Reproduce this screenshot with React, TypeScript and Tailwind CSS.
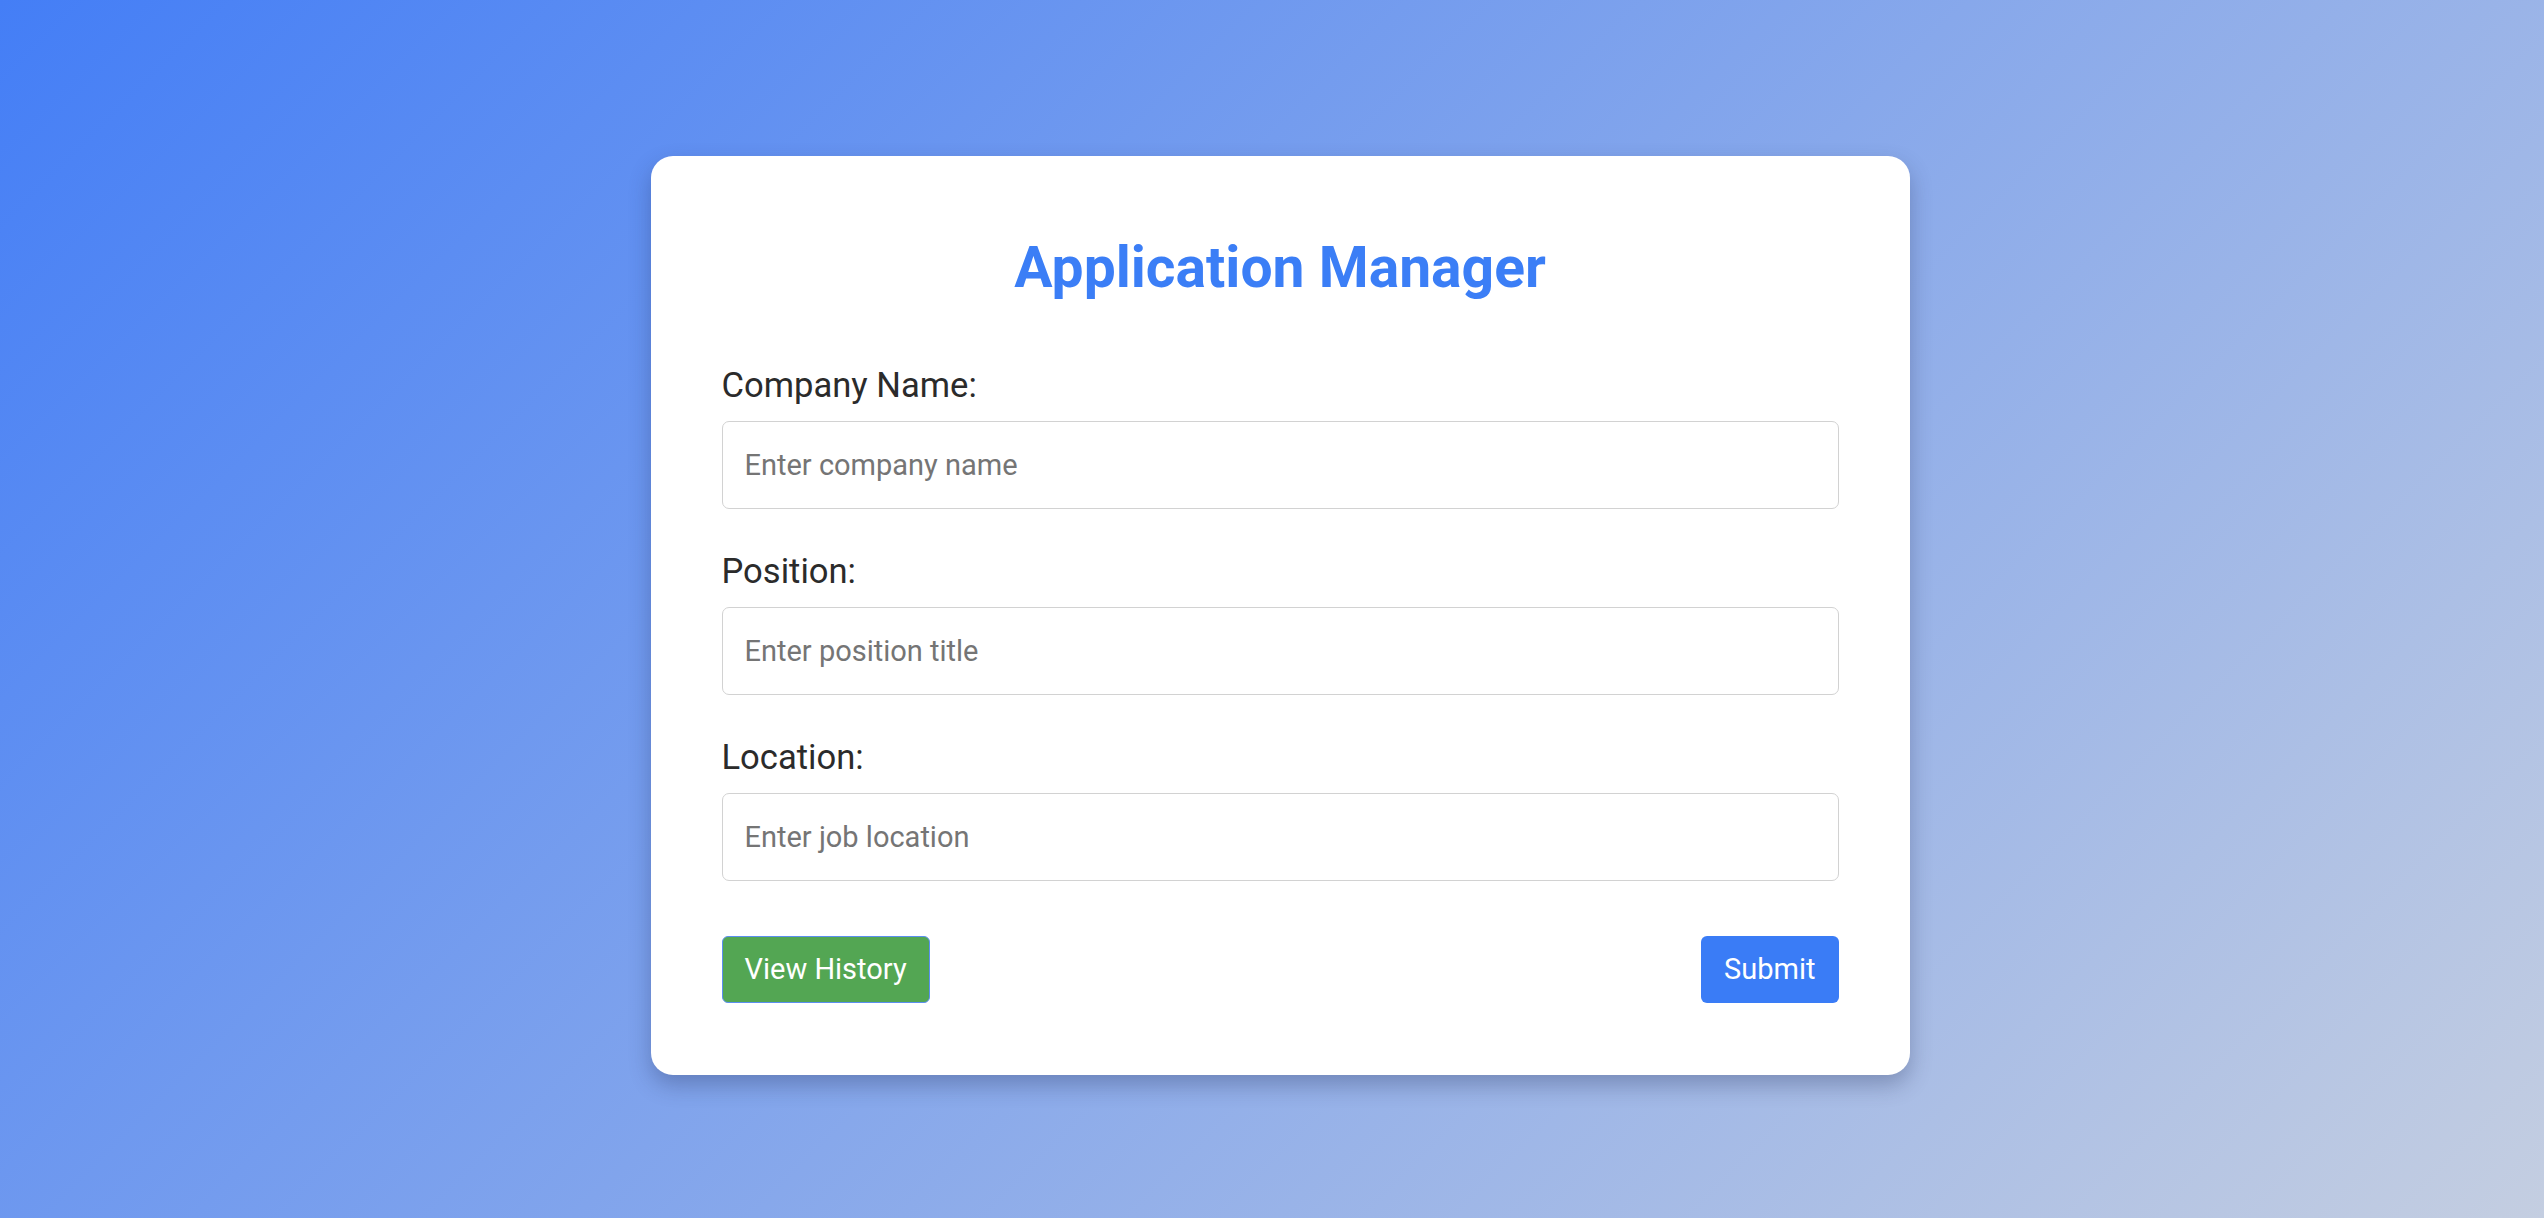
import React, { useState } from 'react';

const font = { fontFamily: 'Roboto, "Noto Sans", Arial, sans-serif' };

function Field({ label, placeholder, value, onChange }: {
  label: string; placeholder: string; value: string; onChange: (v: string) => void;
}) {
  return (
    <div className="flex flex-col mb-[42px]">
      <label className="text-[34.6px] leading-[41px] text-[#2b2b2b] mb-[15px]">{label}</label>
      <input
        value={value}
        onChange={(e) => onChange(e.target.value)}
        placeholder={placeholder}
        className="h-[88px] w-full rounded-[7px] border border-[#d2d2d2] bg-white px-[22px] text-[29px] text-[#222] placeholder:text-[#757575] outline-none"
      />
    </div>
  );
}

export default function App() {
  const [company, setCompany] = useState('');
  const [position, setPosition] = useState('');
  const [location, setLocation] = useState('');

  return (
    <div
      className="min-h-[1218px] w-full flex justify-center items-start pt-[156px] bg-linear-[135deg] from-[#447ef6] to-[#c4cee1]"
      style={font}
    >
      <div className="ml-[16px] w-[1259px] rounded-[22px] bg-white pt-[78px] pb-[72px] px-[71px] shadow-[0_10px_22px_rgba(30,40,80,0.3)]">
        <h1 className="text-center text-[57px] leading-[68px] font-bold text-[#3b7ef6] mb-[63px]">
          Application Manager
        </h1>

        <form onSubmit={(e) => e.preventDefault()}>
          <Field label="Company Name:" placeholder="Enter company name" value={company} onChange={setCompany} />
          <Field label="Position:" placeholder="Enter position title" value={position} onChange={setPosition} />
          <Field label="Location:" placeholder="Enter job location" value={location} onChange={setLocation} />

          <div className="flex justify-between items-center mt-[55px]">
            <button
              type="button"
              className="h-[67px] px-[22px] rounded-[6px] border border-[#5b8ff0] bg-[#53a653] text-white text-[29px]"
            >
              View History
            </button>
            <button
              type="submit"
              className="h-[67px] px-[23px] rounded-[6px] bg-[#3a7cf6] text-white text-[29px]"
            >
              Submit
            </button>
          </div>
        </form>
      </div>
    </div>
  );
}
